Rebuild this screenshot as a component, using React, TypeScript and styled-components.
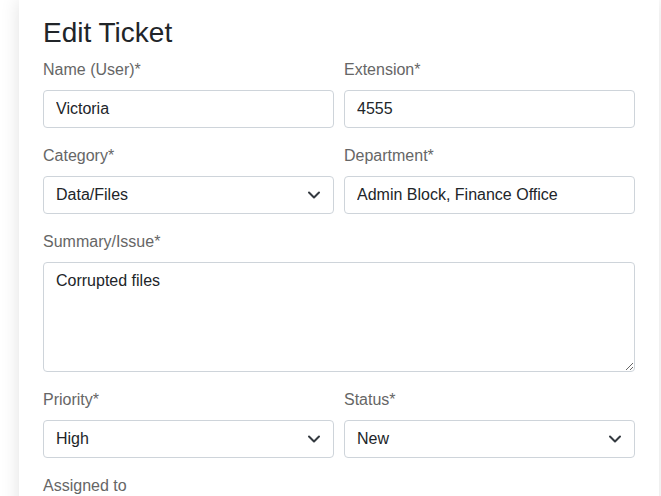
import React from "react";
import styled, { createGlobalStyle } from "styled-components";

const Global = createGlobalStyle`
  html, body { margin: 0; padding: 0; background: #fff; }
  body { font-family: "Liberation Sans", Arial, sans-serif; color: #212529; font-size: 16px; line-height: 1.5; }
  * { box-sizing: border-box; }
`;

const Page = styled.div`
  height: 496px;
  overflow: hidden;
  padding-left: 19px;
`;

const Card = styled.div`
  width: 640px;
  min-height: 520px;
  background: #fff;
  box-shadow: 0 0 18px rgba(0, 0, 0, 0.12);
  padding: 16px 24px 0 24px;
`;

const Title = styled.h2`
  margin: 0 0 8px 0;
  font-size: 28px;
  font-weight: 500;
  line-height: 1.2;
  color: #212529;
`;

const Row = styled.div`
  display: grid;
  grid-template-columns: 1fr 1fr;
  column-gap: 10px;
`;

const Group = styled.div`
  margin-bottom: 16px;
`;

const Label = styled.label`
  display: block;
  margin-bottom: 8px;
  color: #666;
  font-size: 16px;
  line-height: 24px;
`;

const Input = styled.input`
  display: block;
  width: 100%;
  height: 38px;
  padding: 6px 12px;
  font: inherit;
  font-size: 16px;
  line-height: 24px;
  color: #212529;
  background: #fff;
  border: 1px solid #ced4da;
  border-radius: 4px;
  outline: none;
`;

const TextArea = styled.textarea`
  display: block;
  width: 100%;
  height: 110px;
  padding: 6px 12px;
  font: inherit;
  font-size: 16px;
  line-height: 24px;
  color: #212529;
  background: #fff;
  border: 1px solid #ced4da;
  border-radius: 4px;
  outline: none;
  resize: vertical;
`;

const SelectWrap = styled.div`
  position: relative;
`;

const Select = styled.select`
  display: block;
  width: 100%;
  height: 38px;
  padding: 6px 36px 6px 12px;
  font: inherit;
  font-size: 16px;
  line-height: 24px;
  color: #212529;
  background: #fff;
  border: 1px solid #ced4da;
  border-radius: 4px;
  appearance: none;
  -webkit-appearance: none;
  outline: none;
`;

const Chevron = styled.svg`
  position: absolute;
  right: 12px;
  top: 13px;
  width: 16px;
  height: 12px;
  pointer-events: none;
`;

const SelectField: React.FC<{ value: string; options: string[] }> = ({ value, options }) => (
  <SelectWrap>
    <Select defaultValue={value}>
      {options.map((o) => (
        <option key={o}>{o}</option>
      ))}
    </Select>
    <Chevron viewBox="0 0 16 12">
      <path d="M3 3.5l5 5 5-5" fill="none" stroke="#343a40" strokeWidth="2" strokeLinecap="round" strokeLinejoin="round" />
    </Chevron>
  </SelectWrap>
);

export default function App() {
  return (
    <>
      <Global />
      <Page>
        <Card>
          <Title>Edit Ticket</Title>
          <Row>
            <Group>
              <Label>Name (User)*</Label>
              <Input defaultValue="Victoria" />
            </Group>
            <Group>
              <Label>Extension*</Label>
              <Input defaultValue="4555" />
            </Group>
          </Row>
          <Row>
            <Group>
              <Label>Category*</Label>
              <SelectField value="Data/Files" options={["Hardware", "Software", "Network", "Data/Files"]} />
            </Group>
            <Group>
              <Label>Department*</Label>
              <Input defaultValue="Admin Block, Finance Office" />
            </Group>
          </Row>
          <Group>
            <Label>Summary/Issue*</Label>
            <TextArea defaultValue="Corrupted files" />
          </Group>
          <Row>
            <Group>
              <Label>Priority*</Label>
              <SelectField value="High" options={["Low", "Medium", "High"]} />
            </Group>
            <Group>
              <Label>Status*</Label>
              <SelectField value="New" options={["New", "In Progress", "Closed"]} />
            </Group>
          </Row>
          <Group>
            <Label>Assigned to</Label>
          </Group>
        </Card>
      </Page>
    </>
  );
}
